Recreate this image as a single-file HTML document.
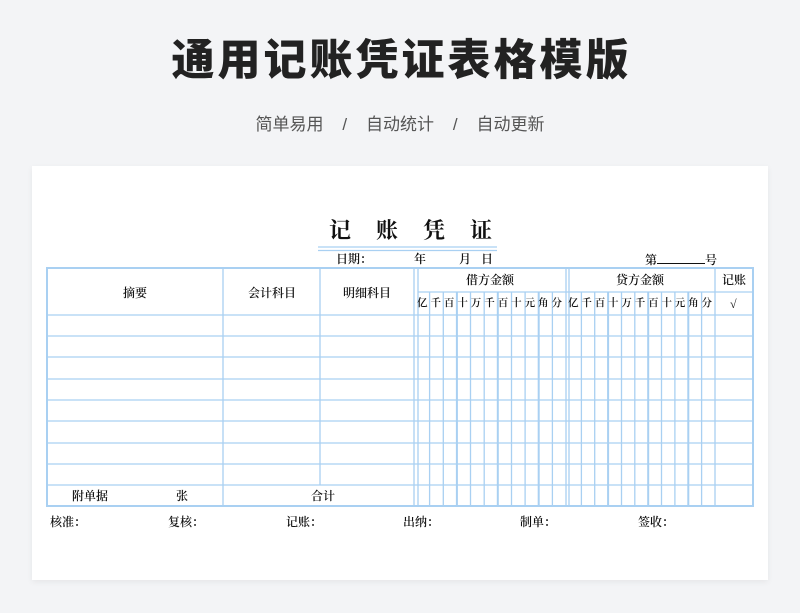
<!DOCTYPE html>
<html><head><meta charset="utf-8"><style>
html,body{margin:0;padding:0}
body{width:800px;height:613px;background:#f3f4f6;position:relative;overflow:hidden;font-family:"Liberation Sans","Noto Sans CJK SC",sans-serif}
.t{position:absolute;left:0;width:800px;text-align:center}
.card{position:absolute;left:32px;top:166px;width:736px;height:414px;background:#fff;box-shadow:0 2px 6px rgba(0,0,0,.06)}
.s{position:absolute;font-family:"Liberation Serif","Noto Serif CJK SC",serif;font-size:12px;color:#111;line-height:14px;white-space:nowrap;font-weight:600}
</style></head><body>
<div class="t" style="top:31px;font-size:43px;font-weight:900;color:#222;line-height:60px;letter-spacing:3px;text-indent:3px">通用记账凭证表格模版</div>
<div class="t" style="top:113px;font-size:17px;color:#555;line-height:24px">简单易用&nbsp;&nbsp;&nbsp;&nbsp;/&nbsp;&nbsp;&nbsp;&nbsp;自动统计&nbsp;&nbsp;&nbsp;&nbsp;/&nbsp;&nbsp;&nbsp;&nbsp;自动更新</div>
<div class="card"></div>
<svg style="position:absolute;left:0;top:0" width="800" height="613">
<g stroke="#a9d0f2" fill="none">
<path d="M318 247H497M318 250.5H497" stroke-width="1.3"/>
<rect x="47" y="268" width="706" height="238" stroke-width="2"/>
<path stroke-width="1.3" d="M223 268V506M320 268V485M414 268V506M418 268V506M566 268V506M569 268V506M715 268V506
M47 315H753M47 336H753M47 357H753M47 379H753M47 400H753M47 421H753M47 443H753M47 464H753M47 485H753M418 292H753
M429.6 292V506M443.3 292V506M456.9 292V506M470.5 292V506M484.2 292V506M497.8 292V506M511.5 292V506M525.1 292V506M538.7 292V506M552.4 292V506
M581.4 292V506M594.7 292V506M608.1 292V506M621.5 292V506M634.8 292V506M648.2 292V506M661.5 292V506M674.9 292V506M688.3 292V506M701.6 292V506"/>
<path stroke-width="2" d="M456.9 292V506M497.8 292V506M538.7 292V506M608.1 292V506M648.2 292V506M688.3 292V506"/>
</g>
</svg>
<div class="s" style="left:329px;top:218px;font-size:22px;line-height:26px;letter-spacing:25px;font-weight:700">记账凭证</div>
<div class="s" style="left:336px;top:252px">日期：</div>
<div class="s" style="left:414px;top:252px">年</div>
<div class="s" style="left:459px;top:252px">月</div>
<div class="s" style="left:481px;top:252px">日</div>
<div class="s" style="left:645px;top:252px">第<span style="display:inline-block;width:48px;border-bottom:1px solid #111;height:11px"></span>号</div>
<div class="s" style="left:123px;top:286px">摘要</div>
<div class="s" style="left:248px;top:286px">会计科目</div>
<div class="s" style="left:343px;top:286px">明细科目</div>
<div class="s" style="left:466px;top:273px">借方金额</div>
<div class="s" style="left:616px;top:273px">贷方金额</div>
<div class="s" style="left:722px;top:273px">记账</div>
<div class="s" style="left:730px;top:297px">√</div>
<div class="s" style="left:417px;top:297px;font-size:10.5px;letter-spacing:2.95px">亿千百十万千百十元角分</div>
<div class="s" style="left:568px;top:297px;font-size:10.5px;letter-spacing:2.85px">亿千百十万千百十元角分</div>
<div class="s" style="left:72px;top:489px">附单据</div>
<div class="s" style="left:176px;top:489px">张</div>
<div class="s" style="left:311px;top:489px">合计</div>
<div class="s" style="left:50px;top:515px">核准：</div>
<div class="s" style="left:168px;top:515px">复核：</div>
<div class="s" style="left:286px;top:515px">记账：</div>
<div class="s" style="left:403px;top:515px">出纳：</div>
<div class="s" style="left:520px;top:515px">制单：</div>
<div class="s" style="left:638px;top:515px">签收：</div>
</body></html>
